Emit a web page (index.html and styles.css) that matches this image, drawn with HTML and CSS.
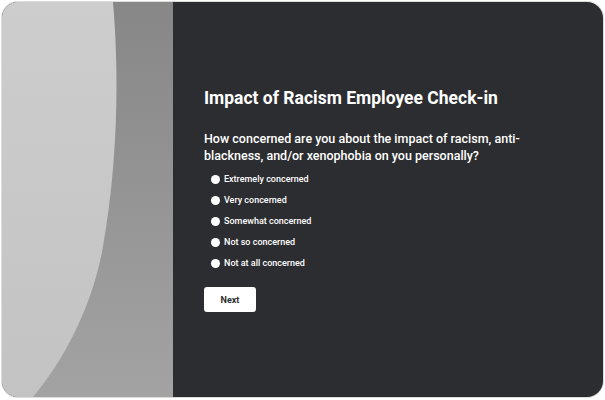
FILE: index.html
```html
<!DOCTYPE html>
<html>
<head>
<meta charset="utf-8">
<link rel="stylesheet" href="styles.css">
</head>
<body>
<div class="card">
  <div class="art">
    <svg class="art-svg" viewBox="0 0 171 395" preserveAspectRatio="none">
      <defs>
        <linearGradient id="g1" x1="0" y1="0" x2="0" y2="1">
          <stop offset="0" stop-color="#878787"/>
          <stop offset="1" stop-color="#a3a3a3"/>
        </linearGradient>
        <linearGradient id="g2" x1="0" y1="0" x2="0" y2="1">
          <stop offset="0" stop-color="#cdcdcd"/>
          <stop offset="1" stop-color="#c3c3c3"/>
        </linearGradient>
      </defs>
      <rect width="171" height="395" fill="url(#g1)"/>
      <path d="M0 0 H111 C116 60 118 150 100 250 C88 310 60 360 31 395 H0 Z" fill="url(#g2)"/>
    </svg>
  </div>
  <div class="content">
    <h1 class="title">Impact of Racism Employee Check-in</h1>
    <p class="question">How concerned are you about the impact of racism, anti-blackness, and/or xenophobia on you personally?</p>
    <ul class="options">
      <li class="option"><span class="radio"></span>Extremely concerned</li>
      <li class="option"><span class="radio"></span>Very concerned</li>
      <li class="option"><span class="radio"></span>Somewhat concerned</li>
      <li class="option"><span class="radio"></span>Not so concerned</li>
      <li class="option"><span class="radio"></span>Not at all concerned</li>
    </ul>
    <button class="next">Next</button>
  </div>
</div>
</body>
</html>
```

FILE: styles.css
```css
html, body {
  margin: 0;
  padding: 0;
  background: #ffffff;
}
body {
  padding: 2px;
  font-family: Roboto, "Liberation Sans", sans-serif;
}
.card {
  width: 601px;
  height: 395px;
  box-sizing: border-box;
  border-radius: 16px;
  overflow: hidden;
  display: flex;
  background: #2c2d30;
  box-shadow: 0 0 0 1px #dcdcdc;
}
.art {
  width: 171px;
  flex: none;
  display: flex;
}
.art-svg {
  width: 171px;
  height: 395px;
  display: block;
}
.content {
  flex: 1;
  padding: 84px 0 0 31px;
  color: #ffffff;
}
.title {
  margin: 0;
  font-size: 17.5px;
  font-weight: 700;
  line-height: 24px;
}
.question {
  margin: 20px 0 0;
  width: 322px;
  font-size: 12.5px;
  font-weight: 500;
  line-height: 17px;
}
.options {
  list-style: none;
  margin: 8px 0 0;
  padding: 0 0 0 7px;
  display: flex;
  flex-direction: column;
  gap: 7px;
}
.option {
  display: flex;
  align-items: center;
  font-size: 9px;
  font-weight: 500;
  line-height: 14px;
}
.radio {
  width: 9px;
  height: 9px;
  border-radius: 50%;
  background: #ffffff;
  margin-right: 4px;
  flex: none;
}
.next {
  margin-top: 17px;
  width: 52px;
  height: 25px;
  border: none;
  border-radius: 3px;
  background: #ffffff;
  color: #2c2d30;
  font-family: inherit;
  font-size: 9px;
  font-weight: 700;
  padding: 0;
}
```
